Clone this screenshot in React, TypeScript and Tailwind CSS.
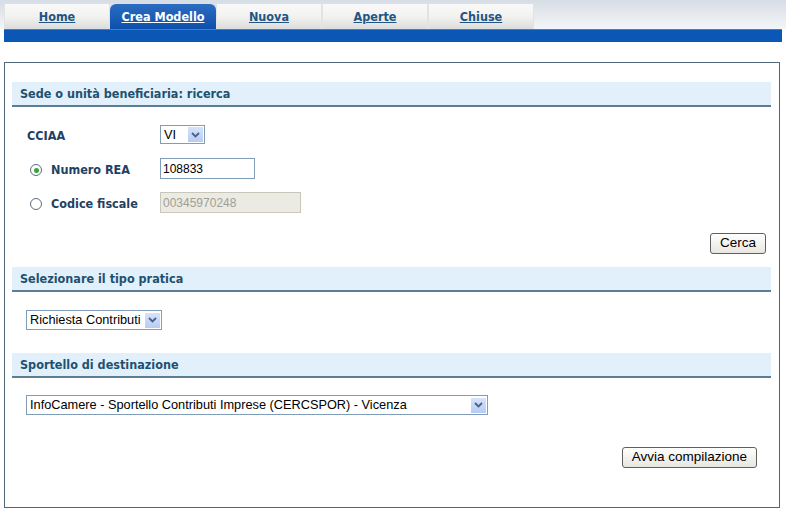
import type { ReactNode } from "react";

const tabs = ["Home", "Crea Modello", "Nuova", "Aperte", "Chiuse"];

const boldFont = "font-['DejaVu_Sans_Condensed','DejaVu_Sans',sans-serif]";

function Tab({ label, active }: { label: string; active?: boolean }) {
  return (
    <div
      className={
        active
          ? "w-[106px] h-[25px] flex items-center justify-center pt-[2px] rounded-t-[6px] bg-gradient-to-b from-[#2b6cc0] to-[#0b51ad]"
          : "w-[106px] h-[25px] flex items-center justify-center pt-[2px] border-x border-[#e3e3e3] bg-gradient-to-b from-[#f9f9f9] via-[#f2f2f0] to-[#dcdcdc]"
      }
    >
      <span
        className={`${boldFont} text-[12.5px] font-bold underline ${
          active ? "text-white" : "text-[#1f5585]"
        }`}
      >
        {label}
      </span>
    </div>
  );
}

function SectionHeader({ children }: { children: ReactNode }) {
  return (
    <div className="h-[25px] bg-[#e2f0fb] border-b-2 border-[#5d7d93] flex items-center pl-[8px] pt-[1px]">
      <span className={`${boldFont} text-[12.5px] font-bold text-[#1e5170]`}>{children}</span>
    </div>
  );
}

function Chevron() {
  return (
    <div className="w-[15px] h-[15px] bg-gradient-to-b from-[#d6e3fb] to-[#b7cbf5] flex items-center justify-center">
      <svg width="9" height="6" viewBox="0 0 9 6">
        <path d="M1 1 L4.5 4.5 L8 1" stroke="#4d6185" strokeWidth="1.8" fill="none" />
      </svg>
    </div>
  );
}

function Select({ value, width, height = 20 }: { value: string; width: number; height?: number }) {
  return (
    <div
      className="border border-[#7f9db9] bg-white flex items-center justify-between pl-[3px] pr-[1px]"
      style={{ width, height }}
    >
      <span className="font-['Liberation_Sans',Arial,sans-serif] text-[12.75px] text-black whitespace-nowrap">
        {value}
      </span>
      <Chevron />
    </div>
  );
}

function Radio({ checked }: { checked?: boolean }) {
  return (
    <div className="w-[12px] h-[12px] rounded-full border border-[#5a6e80] bg-white flex items-center justify-center">
      {checked && <div className="w-[5px] h-[5px] rounded-full bg-[#3aa33a]" />}
    </div>
  );
}

function Button({ children }: { children: ReactNode }) {
  return (
    <div className="h-[21px] px-[9px] rounded-[3px] border border-[#5f5f5f] bg-gradient-to-b from-white to-[#e8e6de] flex items-center font-['Liberation_Sans',Arial,sans-serif] text-[13.5px] text-black">
      {children}
    </div>
  );
}

const labelCls = `${boldFont} text-[12.5px] font-bold text-[#1f4163]`;

export default function App() {
  return (
    <div className="w-[786px] h-[511px] bg-white overflow-hidden">
      <div className="h-[29px] bg-gradient-to-b from-[#d7dde5] to-[#f3f5f8] flex items-end pl-[4px]">
        {tabs.map((t) => (
          <Tab key={t} label={t} active={t === "Crea Modello"} />
        ))}
      </div>
      <div className="mx-[4px] h-[13px] bg-[#0b57b6] border-t border-[#3f7fcb]" />

      <div className="mt-[20px] mx-[4px] w-[776px] h-[446px] border border-[#4e6676] pt-[19px] pl-[7px] pr-[8px]">
        <SectionHeader>Sede o unità beneficiaria: ricerca</SectionHeader>

        <div className="mt-[18px] flex items-center h-[19px]">
          <span className={`${labelCls} w-[148px] pl-[15px] pt-[4px]`}>CCIAA</span>
          <Select value="VI" width={45} height={19} />
        </div>

        <div className="mt-[14px] flex items-center h-[21px]">
          <div className="w-[148px] flex items-center pl-[18px] gap-[9px] pt-[3px]">
            <Radio checked />
            <span className={labelCls}>Numero REA</span>
          </div>
          <div className="w-[95px] h-[21px] border border-[#7f9db9] bg-white flex items-center pl-[2px] font-['Liberation_Sans',Arial,sans-serif] text-[12px] text-black">
            108833
          </div>
        </div>

        <div className="mt-[13px] flex items-center h-[21px]">
          <div className="w-[148px] flex items-center pl-[18px] gap-[9px] pt-[3px]">
            <Radio />
            <span className={labelCls}>Codice fiscale</span>
          </div>
          <div className="w-[141px] h-[21px] border border-[#c9c7ba] bg-[#ebeae3] flex items-center pl-[2px] font-['Liberation_Sans',Arial,sans-serif] text-[12px] text-[#a19f95]">
            00345970248
          </div>
        </div>

        <div className="mt-[20px] flex justify-end pr-[5px]">
          <Button>Cerca</Button>
        </div>

        <div className="mt-[13px]">
          <SectionHeader>Selezionare il tipo pratica</SectionHeader>
        </div>

        <div className="mt-[18px] pl-[14px]">
          <Select value="Richiesta Contributi" width={136} />
        </div>

        <div className="mt-[23px]">
          <SectionHeader>Sportello di destinazione</SectionHeader>
        </div>

        <div className="mt-[17px] pl-[14px]">
          <Select value="InfoCamere - Sportello Contributi Imprese (CERCSPOR) - Vicenza" width={462} />
        </div>

        <div className="mt-[32px] flex justify-end pr-[14px]">
          <Button>Avvia compilazione</Button>
        </div>
      </div>
    </div>
  );
}
